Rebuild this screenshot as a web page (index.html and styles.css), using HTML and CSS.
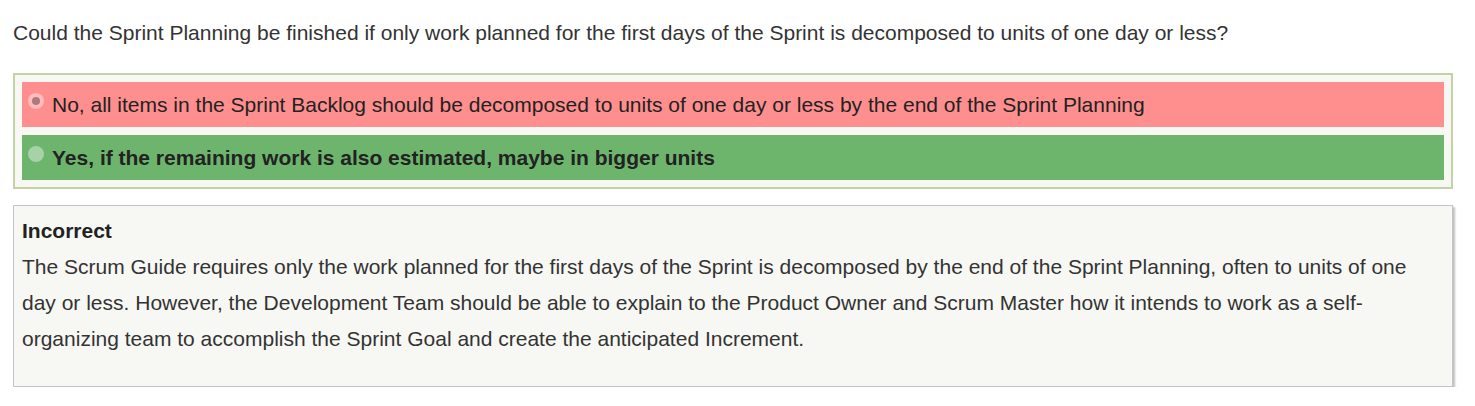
FILE: index.html
```html
<!DOCTYPE html>
<html>
<head>
<meta charset="utf-8">
<link rel="stylesheet" href="styles.css">
</head>
<body>
<div class="page">
  <p class="question">Could the Sprint Planning be finished if only work planned for the first days of the Sprint is decomposed to units of one day or less?</p>
  <div class="answers">
    <label class="answer wrong">
      <span class="radio checked"><span class="dot"></span></span>
      <span class="answer-text">No, all items in the Sprint Backlog should be decomposed to units of one day or less by the end of the Sprint Planning</span>
    </label>
    <label class="answer right">
      <span class="radio"></span>
      <span class="answer-text">Yes, if the remaining work is also estimated, maybe in bigger units</span>
    </label>
  </div>
  <div class="feedback">
    <div class="feedback-title">Incorrect</div>
    <div class="feedback-body">The Scrum Guide requires only the work planned for the first days of the Sprint is decomposed by the end of the Sprint Planning, often to units of one day or less. However, the Development Team should be able to explain to the Product Owner and Scrum Master how it intends to work as a self-organizing team to accomplish the Sprint Goal and create the anticipated Increment.</div>
  </div>
</div>
</body>
</html>
```

FILE: styles.css
```css
html, body {
  margin: 0;
  padding: 0;
  background: #ffffff;
}
body {
  font-family: "Liberation Sans", Arial, sans-serif;
  font-size: 21px;
  color: #333333;
}
.page {
  padding: 0 22px 0 13px;
}
.question {
  margin: 0;
  padding-top: 20px;
  line-height: 26px;
  height: 53px;
}
.answers {
  border: 2px solid #c5d2a3;
  background: #f7f8f4;
  padding: 7px;
  display: flex;
  flex-direction: column;
  gap: 8px;
}
.answer {
  display: flex;
  align-items: center;
  height: 45px;
  padding-left: 6px;
  color: #222222;
}
.answer.wrong {
  background: #ff8f8f;
}
.answer.right {
  background: #6db56d;
  font-weight: bold;
}
.radio {
  width: 16px;
  height: 16px;
  border-radius: 50%;
  background: rgba(255, 255, 255, 0.4);
  margin-right: 8px;
  margin-top: -8px;
  display: flex;
  align-items: center;
  justify-content: center;
  flex-shrink: 0;
}
.radio .dot {
  width: 8px;
  height: 8px;
  border-radius: 50%;
  background: #b07a7a;
}
.answer-text {
  line-height: 26px;
}
.feedback {
  margin-top: 16px;
  border: 1px solid #c4c4c4;
  box-shadow: 2px 2px 2px #c0c0c0;
  background: #f7f8f4;
  padding: 7px 8px 0 8px;
  height: 173px;
  line-height: 36px;
  color: #333333;
}
.feedback-title {
  font-weight: bold;
  color: #222222;
}
```
